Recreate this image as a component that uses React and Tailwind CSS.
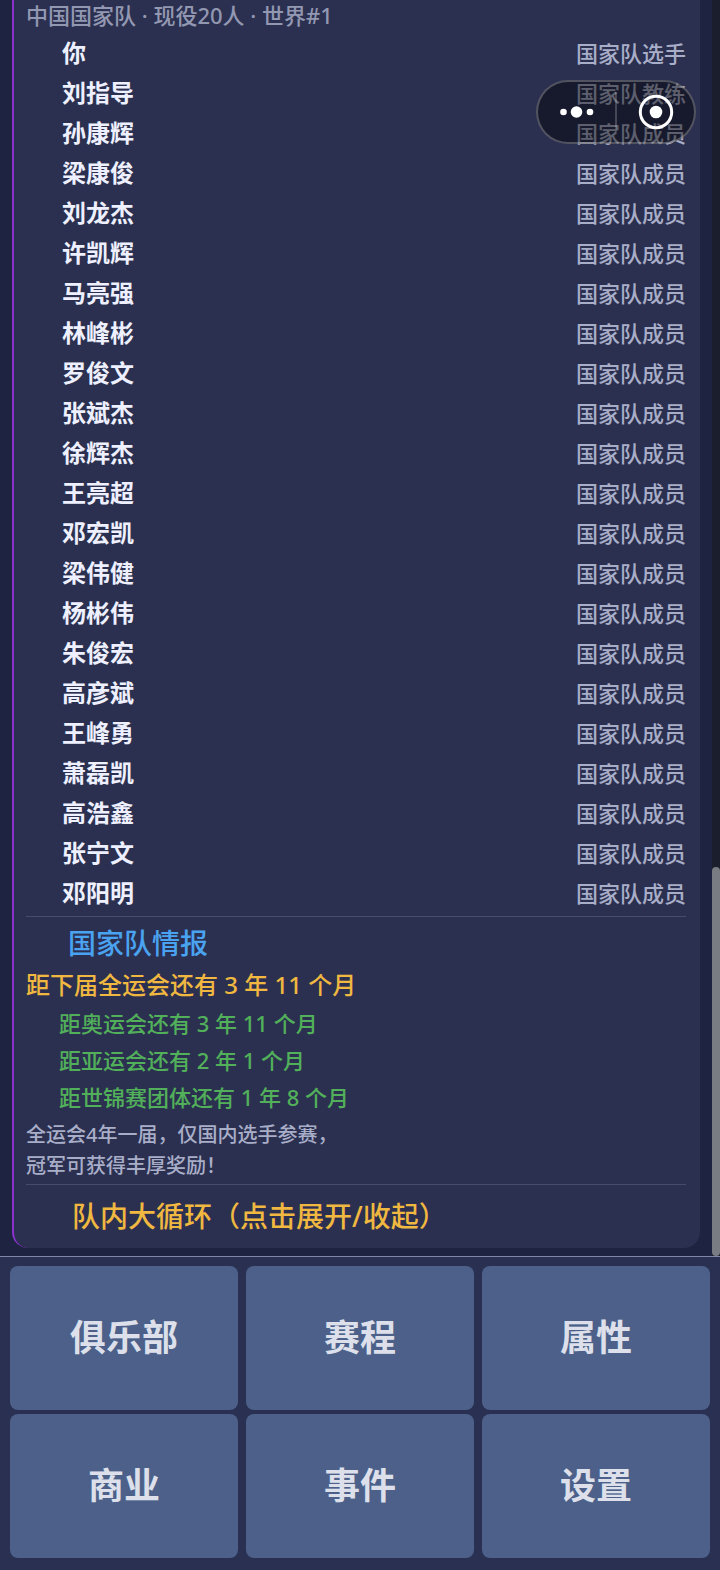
import React from 'react';

const members = [
  { name: '你', role: '国家队选手' },
  { name: '刘指导', role: '国家队教练' },
  { name: '孙康辉', role: '国家队成员' },
  { name: '梁康俊', role: '国家队成员' },
  { name: '刘龙杰', role: '国家队成员' },
  { name: '许凯辉', role: '国家队成员' },
  { name: '马亮强', role: '国家队成员' },
  { name: '林峰彬', role: '国家队成员' },
  { name: '罗俊文', role: '国家队成员' },
  { name: '张斌杰', role: '国家队成员' },
  { name: '徐辉杰', role: '国家队成员' },
  { name: '王亮超', role: '国家队成员' },
  { name: '邓宏凯', role: '国家队成员' },
  { name: '梁伟健', role: '国家队成员' },
  { name: '杨彬伟', role: '国家队成员' },
  { name: '朱俊宏', role: '国家队成员' },
  { name: '高彦斌', role: '国家队成员' },
  { name: '王峰勇', role: '国家队成员' },
  { name: '萧磊凯', role: '国家队成员' },
  { name: '高浩鑫', role: '国家队成员' },
  { name: '张宁文', role: '国家队成员' },
  { name: '邓阳明', role: '国家队成员' },
];

const countdowns = [
  '距奥运会还有 3 年 11 个月',
  '距亚运会还有 2 年 1 个月',
  '距世锦赛团体还有 1 年 8 个月',
];

const tabs = ['俱乐部', '赛程', '属性', '商业', '事件', '设置'];

function MemberList() {
  return (
    <ul className="pt-[3px]">
      {members.map((member) => (
        <li
          key={member.name}
          className="flex h-10 items-center justify-between pl-9"
        >
          <span className="text-[24px] leading-8 font-bold text-[#eef0ff]">
            {member.name}
          </span>
          <span className="text-[22px] leading-8 text-[#a9aec8]">
            {member.role}
          </span>
        </li>
      ))}
    </ul>
  );
}

function TeamInfo() {
  return (
    <section className="mt-[3px] border-t border-[#474c6b] pt-1.5">
      <h2 className="pl-[42px] text-[28px] leading-10 text-[#4aa3f0]">
        国家队情报
      </h2>
      <p className="mt-0.5 text-[24px] leading-10 text-[#f0b840]">
        距下届全运会还有 3 年 11 个月
      </p>
      <ul className="pl-[33px] text-[22px] leading-[37px] text-[#52b05a]">
        {countdowns.map((text) => (
          <li key={text}>{text}</li>
        ))}
      </ul>
      <p className="pt-[3px] text-[20px] leading-[31px] text-[#a9aec8]">
        全运会4年一届，仅国内选手参赛，
        <br />
        冠军可获得丰厚奖励！
      </p>
    </section>
  );
}

// floating mini-program menu
function Capsule() {
  return (
    <div className="absolute top-20 right-6 flex h-16 w-40 items-center rounded-full border-2 border-white/25 bg-black/45">
      <button
        type="button"
        aria-label="更多"
        className="flex h-full flex-1 items-center justify-center"
      >
        <svg width="36" height="14" viewBox="0 0 36 14" fill="#fff">
          <circle cx="4.5" cy="7" r="3.3" />
          <circle cx="17.5" cy="7" r="5.8" />
          <circle cx="31" cy="7" r="3.3" />
        </svg>
      </button>
      <div className="h-10 w-0.5 bg-white/20" />
      <button
        type="button"
        aria-label="关闭"
        className="flex h-full flex-1 items-center justify-center"
      >
        <svg width="36" height="36" viewBox="0 0 36 36">
          <circle cx="18" cy="18" r="15.7" fill="none" stroke="#fff" strokeWidth="3" />
          <circle cx="18" cy="18" r="6.3" fill="#fff" />
        </svg>
      </button>
    </div>
  );
}

function TabBar() {
  return (
    <nav className="grid grid-cols-3 gap-x-2 gap-y-1 border-t border-[#7f86a8] bg-[#2a3052] px-2.5 pt-[9px] pb-3">
      {tabs.map((tab) => (
        <button
          key={tab}
          type="button"
          className="h-36 rounded-lg bg-[#4c608a] text-[36px] font-bold text-[#dde0ea]"
        >
          {tab}
        </button>
      ))}
    </nav>
  );
}

export default function App() {
  return (
    <div className="relative flex min-h-screen flex-col bg-[#1e2341] font-['Noto_Sans','Noto_Sans_CJK_SC',sans-serif] font-medium">
      <main className="flex flex-1">
        <div className="flex-1 px-3 pb-2">
          <div className="rounded-b-2xl border-l-2 border-[#8b31cf] bg-[#2b3050] pr-3.5 pb-3 pl-3">
            <h1 className="text-[22px] leading-[30px] text-[#9398b2]">
              中国国家队 · 现役20人 · 世界#1
            </h1>
            <MemberList />
            <TeamInfo />
            <div className="mt-[3px] border-t border-[#474c6b] pt-[11px]">
              <button
                type="button"
                className="block w-full pl-[46px] text-left text-[28px] leading-10 text-[#f0b840]"
              >
                队内大循环（点击展开/收起）
              </button>
            </div>
          </div>
        </div>
        <div className="flex w-2 flex-col justify-end bg-[#1b1e2c]">
          <div className="h-[31%] rounded-full bg-[#7a7c84]" />
        </div>
      </main>
      <TabBar />
      <Capsule />
    </div>
  );
}
